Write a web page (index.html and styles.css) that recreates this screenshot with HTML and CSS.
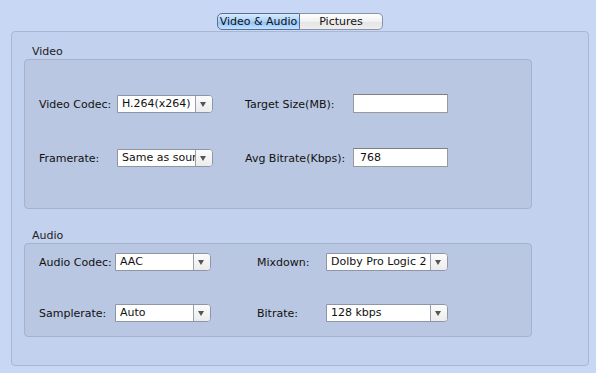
FILE: index.html
```html
<!DOCTYPE html>
<html>
<head>
    <title>Video Settings</title>
    <link rel="stylesheet" href="styles.css">
</head>
<body>
    <div class="window">
        <div class="tabs">
            <button class="tab selected">Video &amp; Audio</button>
            <button class="tab">Pictures</button>
        </div>

        <div class="panel">
            <div class="group-title">Video</div>
            <div class="group video-group">
                <div class="row">
                    <span class="label video-label">Video Codec:</span>
                    <div class="popup video-popup"><span class="value">H.264(x264)</span><span class="arrow"></span></div>
                    <span class="label video-label2">Target Size(MB):</span>
                    <input class="field" type="text" value="">
                </div>
                <div class="row second-video">
                    <span class="label video-label">Framerate:</span>
                    <div class="popup video-popup"><span class="value">Same as source</span><span class="arrow"></span></div>
                    <span class="label video-label2">Avg Bitrate(Kbps):</span>
                    <input class="field" type="text" value="768">
                </div>
            </div>

            <div class="group-title audio-title">Audio</div>
            <div class="group audio-group">
                <div class="row">
                    <span class="label audio-label">Audio Codec:</span>
                    <div class="popup audio-popup"><span class="value">AAC</span><span class="arrow"></span></div>
                    <span class="label audio-label2">Mixdown:</span>
                    <div class="popup wide-popup"><span class="value">Dolby Pro Logic 2</span><span class="arrow"></span></div>
                </div>
                <div class="row second-audio">
                    <span class="label audio-label">Samplerate:</span>
                    <div class="popup audio-popup"><span class="value">Auto</span><span class="arrow"></span></div>
                    <span class="label audio-label2">Bitrate:</span>
                    <div class="popup wide-popup"><span class="value">128 kbps</span><span class="arrow"></span></div>
                </div>
            </div>
        </div>
    </div>
</body>
</html>
```

FILE: styles.css
```css
body {
    margin: 0;
    background-color: #c8d8f4;
    font-family: "DejaVu Sans", Arial, sans-serif;
    font-size: 11px;
    color: #111;
}

.window {
    width: 596px;
    height: 373px;
    padding-top: 13px;
    box-sizing: border-box;
}

/* segmented control */
.tabs {
    display: flex;
    justify-content: center;
    height: 17px;
    margin-left: 4px;
}

.tab {
    width: 83px;
    height: 17px;
    padding: 0;
    font-family: inherit;
    font-size: 11px;
    color: #111;
    border: 1px solid #8a93a5;
    background: linear-gradient(#ffffff, #f1f1f1 50%, #e4e4e4 51%, #eeeeee);
    border-radius: 0 5px 5px 0;
    border-left: none;
}

.tab.selected {
    width: 83px;
    border: 1px solid #5a6f98;
    border-radius: 5px 0 0 5px;
    background: linear-gradient(#d6ebff, #a9d1fb 50%, #8cc0f8 51%, #c2e2ff);
}

/* tab panel */
.panel {
    margin: 1px 7px 0 11px;
    height: 335px;
    box-sizing: border-box;
    background-color: #c2d1ed;
    border: 1px solid #a9b7d2;
    border-radius: 4px;
    padding: 13px 0 0 12px;
}

.group-title {
    height: 14px;
    line-height: 14px;
    padding-left: 8px;
    color: #222;
}

.audio-title {
    margin-top: 20px;
}

.group {
    width: 508px;
    box-sizing: border-box;
    background-color: #b9c7e2;
    border: 1px solid #a5b2cc;
    border-radius: 4px;
}

.video-group {
    height: 150px;
    padding: 35px 0 0 14px;
}

.audio-group {
    height: 94px;
    padding: 9px 0 0 14px;
}

.row {
    display: flex;
    align-items: center;
    height: 18px;
}

.second-video {
    margin-top: 36px;
}

.second-audio {
    margin-top: 33px;
}

.label {
    white-space: nowrap;
}

.video-label { width: 78px; }
.video-label2 { width: 108px; margin-left: 32px; }
.audio-label { width: 76px; }
.audio-label2 { width: 69px; margin-left: 46px; }

/* popup buttons */
.popup {
    display: flex;
    height: 18px;
    box-sizing: border-box;
    background-color: #fff;
    border: 1px solid #8e96a6;
    border-radius: 0 4px 4px 0;
    overflow: hidden;
}

.video-popup { width: 96px; }
.audio-popup { width: 96px; }
.wide-popup { width: 122px; }

.popup .value {
    flex: 1;
    padding-left: 4px;
    line-height: 16px;
    white-space: nowrap;
    overflow: hidden;
}

.popup .arrow {
    position: relative;
    width: 16px;
    border-left: 1px solid #9aa1ae;
    background: linear-gradient(#fbfbfb, #ececec);
}

.popup .arrow::after {
    content: "";
    position: absolute;
    left: 4px;
    top: 6px;
    border-left: 3.5px solid transparent;
    border-right: 3.5px solid transparent;
    border-top: 5px solid #555;
}

/* text fields */
.field {
    width: 95px;
    height: 19px;
    box-sizing: border-box;
    margin: -2px 0 0 0;
    padding: 0 0 0 6px;
    border: 1px solid #9a9a9a;
    border-top-color: #7f7f7f;
    font-family: inherit;
    font-size: 11px;
    color: #111;
    background-color: #fff;
}
```
